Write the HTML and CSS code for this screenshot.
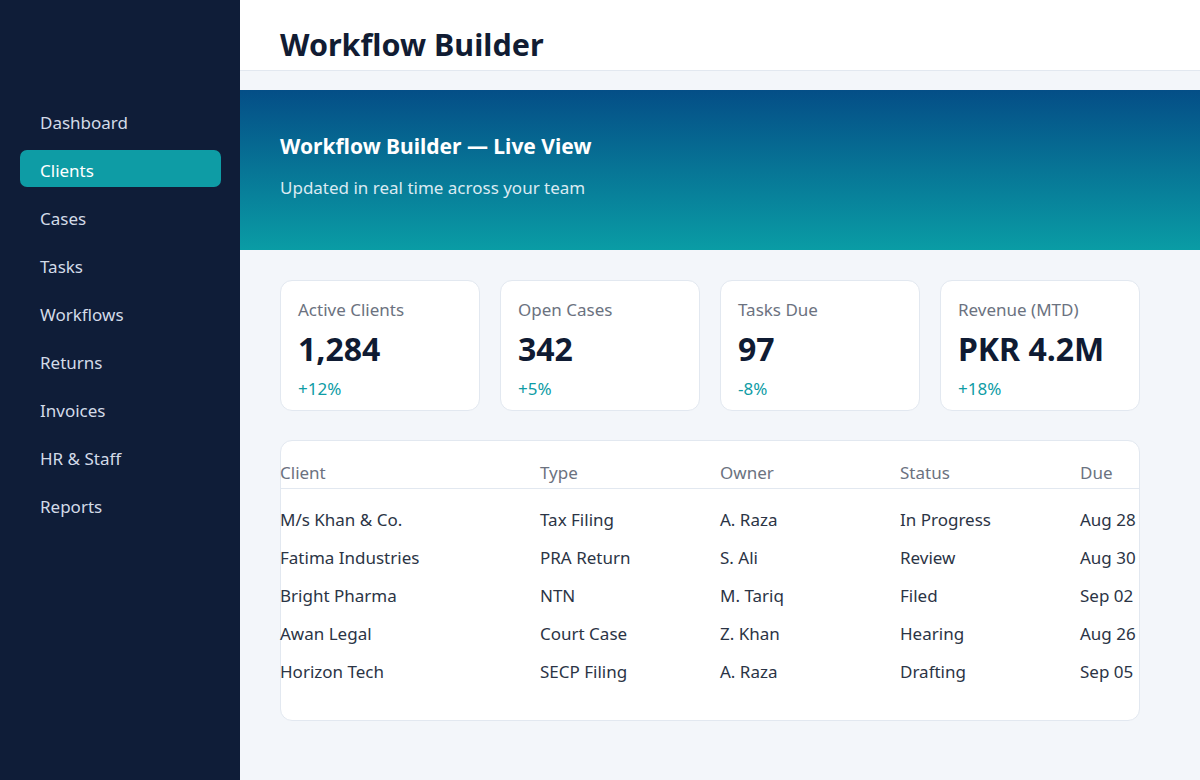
FILE: index.html
```html
<!DOCTYPE html>
<html lang="en">
<head>
<meta charset="utf-8">
<title>Workflow Builder</title>
<link rel="stylesheet" href="styles.css">
</head>
<body>
<div class="app">
  <aside class="sidebar">
    <nav class="nav">
      <a class="nav-item">Dashboard</a>
      <a class="nav-item active">Clients</a>
      <a class="nav-item">Cases</a>
      <a class="nav-item">Tasks</a>
      <a class="nav-item">Workflows</a>
      <a class="nav-item">Returns</a>
      <a class="nav-item">Invoices</a>
      <a class="nav-item">HR &amp; Staff</a>
      <a class="nav-item">Reports</a>
    </nav>
  </aside>
  <main class="main">
    <header class="topbar">
      <h1>Workflow Builder</h1>
    </header>
    <section class="banner">
      <h2>Workflow Builder — Live View</h2>
      <p>Updated in real time across your team</p>
    </section>
    <section class="stats">
      <div class="card">
        <div class="card-label">Active Clients</div>
        <div class="card-value">1,284</div>
        <div class="card-delta">+12%</div>
      </div>
      <div class="card">
        <div class="card-label">Open Cases</div>
        <div class="card-value">342</div>
        <div class="card-delta">+5%</div>
      </div>
      <div class="card">
        <div class="card-label">Tasks Due</div>
        <div class="card-value">97</div>
        <div class="card-delta">-8%</div>
      </div>
      <div class="card">
        <div class="card-label">Revenue (MTD)</div>
        <div class="card-value">PKR 4.2M</div>
        <div class="card-delta">+18%</div>
      </div>
    </section>
    <section class="table-card">
      <div class="row head">
        <span>Client</span><span>Type</span><span>Owner</span><span>Status</span><span>Due</span>
      </div>
      <div class="rows">
        <div class="row"><span>M/s Khan &amp; Co.</span><span>Tax Filing</span><span>A. Raza</span><span>In Progress</span><span>Aug 28</span></div>
        <div class="row"><span>Fatima Industries</span><span>PRA Return</span><span>S. Ali</span><span>Review</span><span>Aug 30</span></div>
        <div class="row"><span>Bright Pharma</span><span>NTN</span><span>M. Tariq</span><span>Filed</span><span>Sep 02</span></div>
        <div class="row"><span>Awan Legal</span><span>Court Case</span><span>Z. Khan</span><span>Hearing</span><span>Aug 26</span></div>
        <div class="row"><span>Horizon Tech</span><span>SECP Filing</span><span>A. Raza</span><span>Drafting</span><span>Sep 05</span></div>
      </div>
    </section>
  </main>
</div>
</body>
</html>
```

FILE: styles.css
```css
* { box-sizing: border-box; }
html, body { margin: 0; padding: 0; }
body {
  font-family: "Noto Sans", "Open Sans", sans-serif;
  background: #f3f6fa;
  color: #0f1b33;
  width: 1200px;
  height: 780px;
  overflow: hidden;
}
.app {
  display: flex;
  height: 780px;
}
.sidebar {
  width: 240px;
  flex: 0 0 240px;
  background: #0f1d38;
  padding: 102px 19px 0 20px;
}
.nav {
  display: flex;
  flex-direction: column;
  gap: 10px;
}
.nav-item {
  display: block;
  height: 38px;
  padding: 4px 20px 0;
  line-height: 34px;
  font-size: 17px;
  color: #d3dbe8;
  border-radius: 7px;
}
.nav-item.active {
  height: 37px;
  margin-bottom: 1px;
  background: #0e9ca5;
  color: #ffffff;
}
.main {
  flex: 1;
  display: flex;
  flex-direction: column;
  min-width: 0;
}
.topbar {
  height: 71px;
  background: #ffffff;
  border-bottom: 1px solid #e2e8f0;
  padding: 0 40px;
  display: flex;
  align-items: center;
}
.topbar h1 {
  margin: 0;
  padding-top: 18px;
  font-size: 30.5px;
  font-weight: 700;
  color: #111c33;
}
.banner {
  margin-top: 19px;
  height: 160px;
  background: linear-gradient(180deg, #044e87 0%, #0a9ca5 100%);
  padding: 42px 40px 0;
  color: #ffffff;
}
.banner h2 {
  margin: 0;
  font-size: 21px;
  line-height: 28px;
  font-weight: 700;
}
.banner p {
  margin: 16px 0 0;
  font-size: 17px;
  line-height: 24px;
  color: #dbeaf2;
}
.stats {
  display: grid;
  grid-template-columns: repeat(4, 200px);
  gap: 20px;
  padding: 30px 40px 0;
}
.card {
  height: 131px;
  background: #ffffff;
  border: 1px solid #e2e8f0;
  border-radius: 12px;
  padding: 17px 17px 0;
}
.card-label {
  font-size: 17px;
  line-height: 24px;
  color: #6b7280;
}
.card-value {
  margin-top: 7px;
  font-size: 32px;
  line-height: 40px;
  font-weight: 700;
  color: #0f1b33;
}
.card-delta {
  margin-top: 8px;
  font-size: 17px;
  line-height: 24px;
  color: #0e9ca5;
}
.table-card {
  margin: 29px 60px 0 40px;
  height: 281px;
  background: #ffffff;
  border: 1px solid #e2e8f0;
  border-radius: 12px;
  padding-top: 21px;
}
.row {
  display: grid;
  grid-template-columns: 260px 180px 180px 180px 1fr;
  margin-left: -1px;
  font-size: 17px;
  height: 38px;
  line-height: 38px;
  color: #2b3445;
  white-space: nowrap;
}
.row.head {
  height: 27px;
  line-height: 22px;
  color: #6b7280;
  border-bottom: 1px solid #e2e8f0;
}
.rows {
  padding-top: 12px;
}
```
